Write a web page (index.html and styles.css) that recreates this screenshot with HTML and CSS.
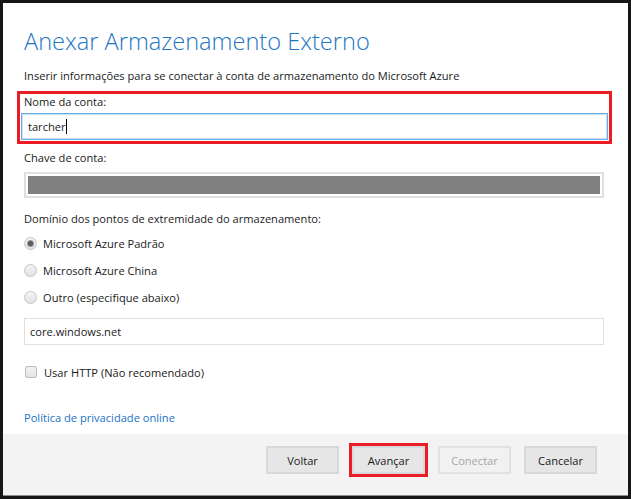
FILE: index.html
```html
<!DOCTYPE html>
<html lang="pt">
<head>
<meta charset="utf-8">
<title>Anexar Armazenamento Externo</title>
<link rel="stylesheet" href="styles.css">
</head>
<body>
<div class="dialog">
  <div class="content">
    <h1 class="title">Anexar Armazenamento Externo</h1>
    <p class="intro">Inserir informações para se conectar à conta de armazenamento do Microsoft Azure</p>
    <div class="highlight">
      <div class="label">Nome da conta:</div>
      <div class="input focused"><span>tarcher</span><span class="caret"></span></div>
    </div>
    <div class="label key-label">Chave de conta:</div>
    <div class="input masked"><div class="mask"></div></div>
    <div class="label domain-label">Domínio dos pontos de extremidade do armazenamento:</div>
    <div class="radios">
      <div class="radio-row"><span class="radio checked"></span><span>Microsoft Azure Padrão</span></div>
      <div class="radio-row"><span class="radio"></span><span>Microsoft Azure China</span></div>
      <div class="radio-row"><span class="radio"></span><span>Outro (especifique abaixo)</span></div>
    </div>
    <div class="input plain">core.windows.net</div>
    <div class="check-row"><span class="checkbox"></span><span>Usar HTTP (Não recomendado)</span></div>
    <a class="link" href="#">Política de privacidade online</a>
  </div>
  <div class="footer">
    <button class="btn">Voltar</button>
    <button class="btn marked">Avançar</button>
    <button class="btn disabled">Conectar</button>
    <button class="btn">Cancelar</button>
  </div>
</div>
</body>
</html>
```
FILE: styles.css
```css
* { box-sizing: border-box; }
html, body { margin: 0; padding: 0; background: #ffffff; }
body {
  font-family: "Open Sans", "Noto Sans", sans-serif;
  font-size: 11.1px;
  color: #1a1a1a;
}
.dialog {
  width: 631px;
  height: 499px;
  border: 3px solid #161616;
  display: flex;
  flex-direction: column;
  background: #ffffff;
}
.content {
  flex: 1;
  padding: 23px 24px 0 21px;
  display: flex;
  flex-direction: column;
  align-items: stretch;
}
.title {
  margin: 0;
  font-size: 23.6px;
  font-weight: 300;
  line-height: 30px;
  color: #1d75c4;
}
.intro {
  margin: 12px 0 0;
  line-height: 16px;
}
.highlight {
  margin: 7px -8px 0 -7px;
  border: 3px solid #ec1c24;
  padding: 0 1px 1px 1px;
}
.label { line-height: 16px; }
.highlight .label { padding-left: 3px; }
.input {
  height: 27px;
  border: 1px solid #dcdcdc;
  display: flex;
  align-items: center;
  padding-left: 5px;
}
.focused {
  margin-top: 3px;
  border: 1px solid #6aaae6;
  box-shadow: inset 0 0 0 1px #c8e1f7;
  padding-left: 6px;
}
.caret {
  display: inline-block;
  width: 1px;
  height: 15px;
  background: #000;
}
.key-label { margin-top: 6px; }
.masked {
  margin-top: 6px;
  height: 26px;
  padding: 2px;
  border: 2px solid #e0e0e0;
}
.mask {
  flex: 1;
  height: 100%;
  background: #808080;
}
.domain-label { margin-top: 13px; }
.radios {
  margin-top: 3px;
  display: flex;
  flex-direction: column;
}
.radio-row {
  height: 27px;
  display: flex;
  align-items: center;
  gap: 6px;
  padding-left: 0;
}
.radio {
  width: 13px;
  height: 13px;
  border-radius: 50%;
  border: 1px solid #c4c4c4;
  background: linear-gradient(#f4f4f4, #e2e2e2);
  display: flex;
  align-items: center;
  justify-content: center;
}
.radio.checked::after {
  content: "";
  width: 5px;
  height: 5px;
  border-radius: 50%;
  background: #5a5a5a;
  box-shadow: 0 0 0 1px #9a9a9a;
}
.plain {
  margin-top: 7px;
  height: 27px;
  border: 1px solid #e0e0e0;
}
.check-row {
  margin-top: 18px;
  height: 18px;
  display: flex;
  align-items: center;
  gap: 7px;
  padding-left: 1px;
}
.checkbox {
  width: 12px;
  height: 12px;
  border: 1px solid #bdbdbd;
  border-radius: 2px;
  background: linear-gradient(#f2f2f2, #e4e4e4);
}
.link {
  margin-top: 29px;
  line-height: 16px;
  color: #1a72c6;
  text-decoration: none;
  align-self: flex-start;
}
.footer {
  height: 62px;
  background: #f3f3f3;
  border-bottom: 1px solid #8c8c8c;
  display: flex;
  justify-content: flex-end;
  align-items: flex-start;
  gap: 13px;
  padding: 12px 31px 0 0;
}
.btn {
  width: 73px;
  height: 28px;
  font-family: inherit;
  font-size: 11.1px;
  color: #1a1a1a;
  background: #e6e6e6;
  border: 2px solid #d8d8dc;
  padding: 0;
}
.btn.marked {
  outline: 3px solid #ec1c24;
  outline-offset: 0;
}
.btn.disabled {
  background: #f1f1f1;
  border-color: #e2e2e6;
  color: #a6a6a6;
}
```
